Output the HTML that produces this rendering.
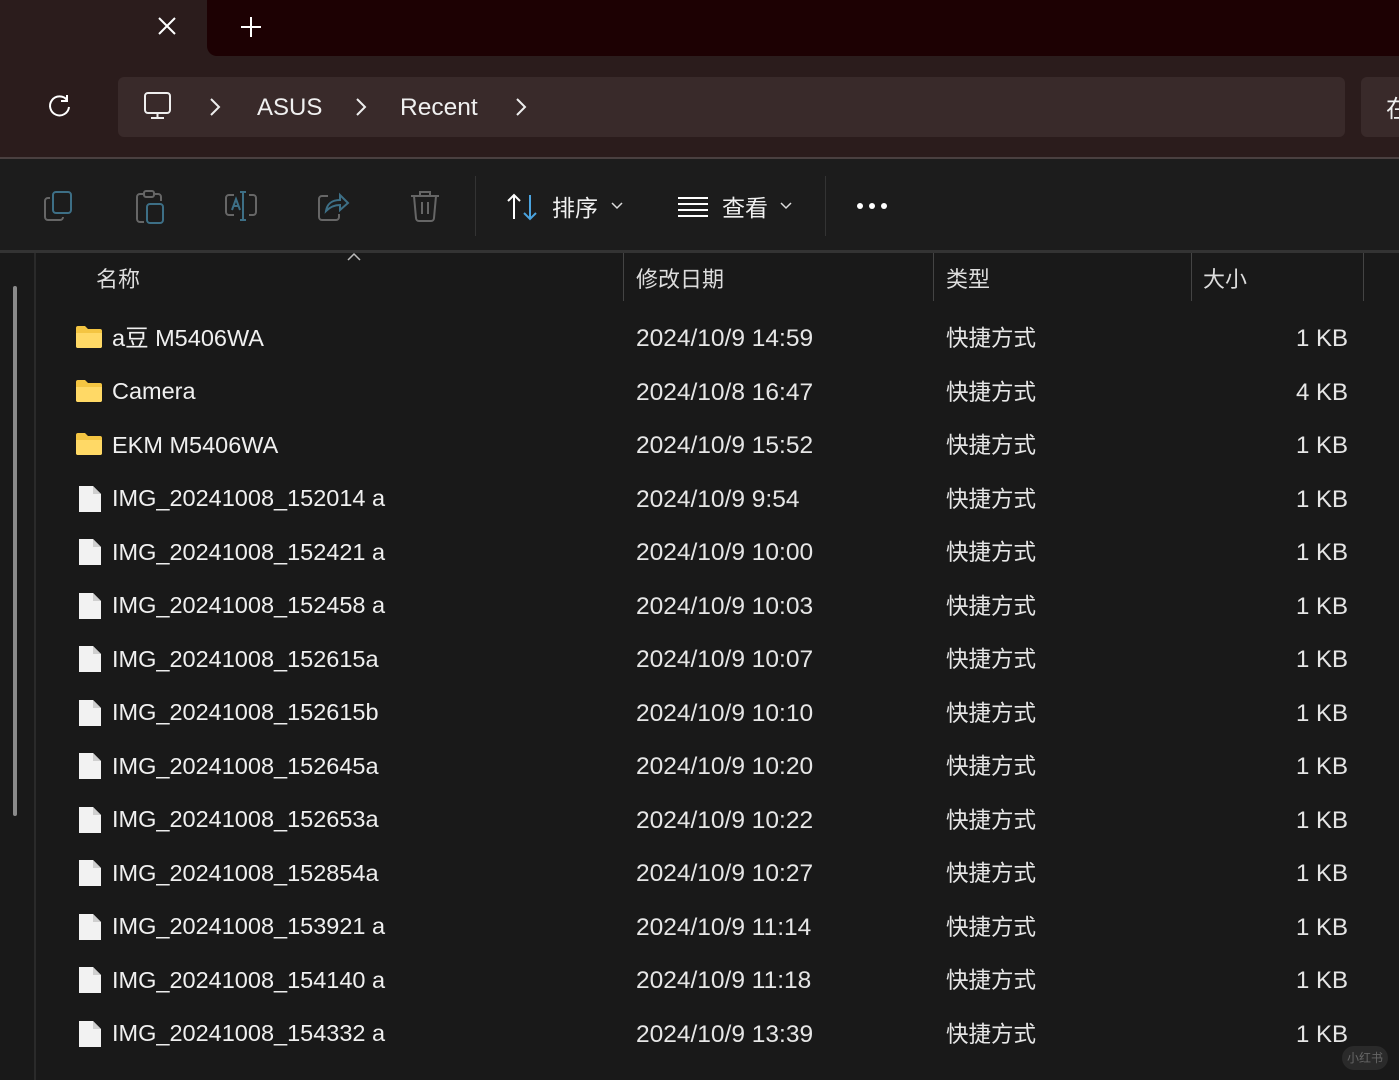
<!DOCTYPE html>
<html><head><meta charset="utf-8"><style>
*{margin:0;padding:0;box-sizing:border-box}
body{width:1399px;height:1080px;overflow:hidden;background:#191919;font-family:"Liberation Sans","Noto Sans CJK SC",sans-serif;color:#f0f0f0;position:relative}
.a{position:absolute}
.t{position:absolute;font-size:23.5px;line-height:30px;white-space:nowrap}
.cj{font-family:"Noto Sans CJK SC",sans-serif}
</style></head><body>
<div class="a" style="left:0;top:0;width:1399px;height:160px;background:#2b1c1c"></div>
<div class="a" style="left:207px;top:0;width:1192px;height:56px;background:#1d0103;border-bottom-left-radius:10px"></div>
<svg class="a" style="left:156px;top:15px" width="22" height="22"><path d="M3 3L19 19M19 3L3 19" stroke="#fff" stroke-width="2"/></svg>
<svg class="a" style="left:240px;top:16px" width="22" height="22"><path d="M11 1V21M1 11H21" stroke="#fff" stroke-width="2"/></svg>
<svg class="a" style="left:46px;top:93px" width="28" height="28"><path d="M21 7A9.5 9.5 0 1 0 23 14" fill="none" stroke="#fff" stroke-width="2"/><path d="M21 2V8H15" fill="none" stroke="#fff" stroke-width="2"/></svg>
<div class="a" style="left:118px;top:77px;width:1227px;height:60px;background:#392a2a;border-radius:6px"></div>
<div class="a" style="left:1361px;top:77px;width:50px;height:60px;background:#392a2a;border-radius:6px"></div>
<div class="t cj" style="left:1386px;top:92px;font-size:24px">在</div>
<svg class="a" style="left:142px;top:91px" width="32" height="30"><rect x="3" y="2" width="25" height="20" rx="3" fill="none" stroke="#eee" stroke-width="2"/><path d="M15.5 22V26M9 27H22" stroke="#eee" stroke-width="2"/></svg>
<svg class="a" style="left:208px;top:97px" width="14" height="20"><path d="M3 2L11 10L3 18" fill="none" stroke="#eee" stroke-width="2"/></svg>
<div class="t" style="left:257px;top:93px;font-size:24px">ASUS</div>
<svg class="a" style="left:354px;top:97px" width="14" height="20"><path d="M3 2L11 10L3 18" fill="none" stroke="#eee" stroke-width="2"/></svg>
<div class="t" style="left:400px;top:93px;font-size:24.5px">Recent</div>
<svg class="a" style="left:514px;top:97px" width="14" height="20"><path d="M3 2L11 10L3 18" fill="none" stroke="#eee" stroke-width="2"/></svg>
<div class="a" style="left:0;top:157px;width:1399px;height:2px;background:#4a4040"></div>
<div class="a" style="left:0;top:159px;width:1399px;height:92px;background:#1c1c1c"></div>
<svg class="a" style="left:42px;top:189px" width="34" height="34"><rect x="11" y="3" width="18" height="21" rx="3" fill="none" stroke="#3d6f86" stroke-width="2"/><path d="M8 9H6a3 3 0 0 0-3 3v16a3 3 0 0 0 3 3h12a3 3 0 0 0 3-3" fill="none" stroke="#666" stroke-width="2"/></svg>
<svg class="a" style="left:134px;top:189px" width="34" height="36"><path d="M9 5H6a3 3 0 0 0-3 3v22a3 3 0 0 0 3 3h4" fill="none" stroke="#666" stroke-width="2"/><path d="M21 5h3a3 3 0 0 1 3 3v4" fill="none" stroke="#666" stroke-width="2"/><rect x="10" y="2" width="10" height="6" rx="2" fill="none" stroke="#666" stroke-width="2"/><rect x="13" y="15" width="16" height="19" rx="3" fill="none" stroke="#3d6f86" stroke-width="2"/></svg>
<svg class="a" style="left:224px;top:190px" width="36" height="32"><path d="M10 5H5a3 3 0 0 0-3 3v14a3 3 0 0 0 3 3h5M25 5h4a3 3 0 0 1 3 3v14a3 3 0 0 1-3 3h-4" fill="none" stroke="#666" stroke-width="2"/><path d="M8 20L12 9L16 20M9.5 16H14.5" fill="none" stroke="#3d6f86" stroke-width="2"/><path d="M19 2V30M16 2H22M16 30H22" stroke="#3d6f86" stroke-width="2"/></svg>
<svg class="a" style="left:316px;top:189px" width="36" height="34"><path d="M12 7H6a3 3 0 0 0-3 3v18a3 3 0 0 0 3 3h14a3 3 0 0 0 3-3v-3" fill="none" stroke="#666" stroke-width="2"/><path d="M10 22c1-7 6-11 14-11V6l8 8-8 7v-5c-6 0-10 2-14 6z" fill="none" stroke="#3d6f86" stroke-width="2"/></svg>
<svg class="a" style="left:408px;top:189px" width="34" height="34"><path d="M3 7H31M12 7V3h10v4M6 7l2 22a3 3 0 0 0 3 3h12a3 3 0 0 0 3-3l2-22M14 13V25M20 13V25" fill="none" stroke="#666" stroke-width="2"/></svg>
<div class="a" style="left:475px;top:176px;width:1px;height:60px;background:#333"></div>
<div class="a" style="left:825px;top:176px;width:1px;height:60px;background:#333"></div>
<svg class="a" style="left:506px;top:192px" width="34" height="30"><path d="M8 27V3M2 9L8 3L14 9" fill="none" stroke="#fff" stroke-width="2"/><path d="M24 3V27M18 21L24 27L30 21" fill="none" stroke="#4aa3df" stroke-width="2"/></svg>
<div class="t cj" style="left:552px;top:191px;font-size:23px">排序</div>
<svg class="a" style="left:610px;top:199px" width="14" height="12"><path d="M2 4L7 9L12 4" fill="none" stroke="#ddd" stroke-width="1.5"/></svg>
<svg class="a" style="left:677px;top:195px" width="32" height="22"><path d="M1 3H31M1 9H31M1 15H31M1 21H31" stroke="#fff" stroke-width="2"/></svg>
<div class="t cj" style="left:722px;top:191px;font-size:23px">查看</div>
<svg class="a" style="left:779px;top:199px" width="14" height="12"><path d="M2 4L7 9L12 4" fill="none" stroke="#ddd" stroke-width="1.5"/></svg>
<svg class="a" style="left:855px;top:199px" width="36" height="14"><circle cx="5" cy="7" r="3" fill="#fff"/><circle cx="17" cy="7" r="3" fill="#fff"/><circle cx="29" cy="7" r="3" fill="#fff"/></svg>
<div class="a" style="left:0;top:250px;width:1399px;height:3px;background:#333"></div>
<div class="a" style="left:34px;top:253px;width:2px;height:827px;background:#2a2a2a"></div>
<div class="a" style="left:13px;top:286px;width:4px;height:530px;background:#8a8a8a;border-radius:2px"></div>
<svg class="a" style="left:346px;top:252px" width="16" height="10"><path d="M2 8L8 2L14 8" fill="none" stroke="#bbb" stroke-width="1.5"/></svg>
<div class="t cj" style="left:96px;top:263px;font-size:22px;color:#ddd">名称</div>
<div class="a" style="left:623px;top:253px;width:1px;height:48px;background:#444"></div>
<div class="t cj" style="left:636px;top:263px;font-size:22px;color:#ddd">修改日期</div>
<div class="a" style="left:933px;top:253px;width:1px;height:48px;background:#444"></div>
<div class="t cj" style="left:946px;top:263px;font-size:22px;color:#ddd">类型</div>
<div class="a" style="left:1191px;top:253px;width:1px;height:48px;background:#444"></div>
<div class="t cj" style="left:1203px;top:263px;font-size:22px;color:#ddd">大小</div>
<div class="a" style="left:1363px;top:253px;width:1px;height:48px;background:#444"></div>
<div id="rows"></div>
<div class="a cj" style="left:1342px;top:1046px;width:46px;height:24px;border-radius:12px;background:#2a2a2a;color:#666;font-size:12px;text-align:center;line-height:24px">小红书</div>
<script>
var d=[["a豆 M5406WA","2024/10/9 14:59","1 KB",1],["Camera","2024/10/8 16:47","4 KB",1],["EKM M5406WA","2024/10/9 15:52","1 KB",1],
["IMG_20241008_152014 a","2024/10/9 9:54","1 KB"],["IMG_20241008_152421 a","2024/10/9 10:00","1 KB"],["IMG_20241008_152458 a","2024/10/9 10:03","1 KB"],
["IMG_20241008_152615a","2024/10/9 10:07","1 KB"],["IMG_20241008_152615b","2024/10/9 10:10","1 KB"],["IMG_20241008_152645a","2024/10/9 10:20","1 KB"],
["IMG_20241008_152653a","2024/10/9 10:22","1 KB"],["IMG_20241008_152854a","2024/10/9 10:27","1 KB"],["IMG_20241008_153921 a","2024/10/9 11:14","1 KB"],
["IMG_20241008_154140 a","2024/10/9 11:18","1 KB"],["IMG_20241008_154332 a","2024/10/9 13:39","1 KB"]];
var h="";d.forEach(function(r,i){var c=338+53.5*i;var y=c-15.5;
var ic=r[3]?'<svg class="a" style="left:75px;top:'+(c-13)+'px" width="28" height="24"><path d="M1 3a2 2 0 0 1 2-2h7l3 3h12a2 2 0 0 1 2 2v15a2 2 0 0 1-2 2H3a2 2 0 0 1-2-2z" fill="#f4c542"/><path d="M1 8h26v13a2 2 0 0 1-2 2H3a2 2 0 0 1-2-2z" fill="#ffd966"/></svg>'
:'<svg class="a" style="left:78px;top:'+(c-14)+'px" width="24" height="28"><path d="M1 1H15L23 9V27H1Z" fill="#f2f2f2"/><path d="M15 1V9H23" fill="#cfcfcf"/></svg>';
h+=ic+'<div class="t" style="left:112px;top:'+y+'px">'+r[0]+'</div><div class="t" style="left:636px;top:'+(y+1.5)+'px;font-size:24.5px;color:#e6e6e6">'+r[1]+'</div><div class="t cj" style="left:946px;top:'+(y-0.5)+'px;font-size:22.5px;color:#e6e6e6">快捷方式</div><div class="t" style="right:51px;top:'+(y+1.5)+'px;font-size:24px;color:#e6e6e6">'+r[2]+'</div>';});
document.getElementById("rows").innerHTML=h;
</script>
</body></html>
